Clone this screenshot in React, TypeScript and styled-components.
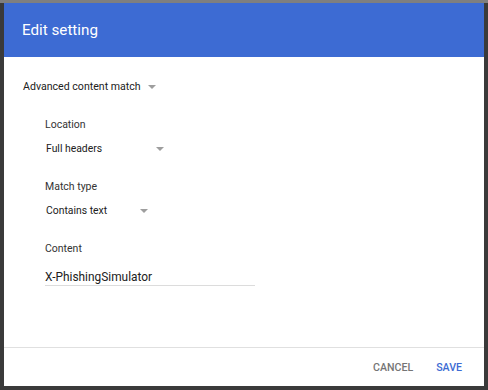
import React from 'react';
import styled, {createGlobalStyle} from 'styled-components';

const GlobalStyle = createGlobalStyle`
  html, body {
    margin: 0;
    padding: 0;
    height: 100%;
  }
  body {
    font-family: Roboto, "Liberation Sans", Arial, sans-serif;
    background: #3a3a3a;
  }
`;

const Backdrop = styled.div`
  width: 488px;
  height: 390px;
  box-sizing: border-box;
  padding: 3px 4px 4px 4px;
  background: linear-gradient(#7f7f7f 0 3px, #3a3a3a 3px 100%);
`;

const Dialog = styled.div`
  width: 480px;
  height: 383px;
  background: #ffffff;
  display: flex;
  flex-direction: column;
`;

const Header = styled.div`
  height: 54px;
  background: #3d6bd3;
  color: #ffffff;
  font-size: 15.2px;
  display: flex;
  align-items: center;
  padding: 0 18px;
  flex-shrink: 0;
`;

const Body = styled.div`
  flex-grow: 1;
  padding: 20px 19px 0 19px;
  display: flex;
  flex-direction: column;
`;

const TopSelect = styled.div`
  display: flex;
  align-items: center;
  height: 18px;
  font-size: 10.6px;
  color: #212121;
  gap: 7px;
`;

const Nested = styled.div`
  padding: 23px 0 0 22px;
  display: flex;
  flex-direction: column;
  gap: 24px;
`;

const Field = styled.div`
  display: flex;
  flex-direction: column;
`;

const Label = styled.div`
  font-size: 10.5px;
  color: #333333;
  height: 14px;
  line-height: 14px;
`;

const Select = styled.div<{$width: number}>`
  display: flex;
  align-items: center;
  justify-content: space-between;
  width: ${p => p.$width}px;
  margin-top: 8px;
  padding-left: 1px;
  height: 16px;
  font-size: 10.4px;
  color: #212121;
`;

const Arrow = styled.span`
  width: 0;
  height: 0;
  border-left: 4.5px solid transparent;
  border-right: 4.5px solid transparent;
  border-top: 4.5px solid #9e9e9e;
  margin-top: 1px;
`;

const Input = styled.div`
  width: 210px;
  margin-top: 14px;
  font-size: 11.9px;
  color: #212121;
  height: 15px;
  line-height: 15px;
  border-bottom: 1px solid #dcdcdc;
`;

const Footer = styled.div`
  height: 38px;
  border-top: 1px solid #e0e0e0;
  display: flex;
  align-items: center;
  justify-content: flex-end;
  padding: 0 22px 0 0;
  gap: 23px;
  flex-shrink: 0;
`;

const Button = styled.span<{$primary?: boolean}>`
  font-size: 10.6px;
  font-weight: 500;
  color: ${p => (p.$primary ? '#3d6bd3' : '#757575')};
`;

export default function App() {
    return (
        <>
            <GlobalStyle/>
            <Backdrop>
                <Dialog>
                    <Header>Edit setting</Header>
                    <Body>
                        <TopSelect>Advanced content match <Arrow/></TopSelect>
                        <Nested>
                            <Field>
                                <Label>Location</Label>
                                <Select $width={118}>Full headers <Arrow/></Select>
                            </Field>
                            <Field>
                                <Label>Match type</Label>
                                <Select $width={102}>Contains text <Arrow/></Select>
                            </Field>
                            <Field>
                                <Label>Content</Label>
                                <Input>X-PhishingSimulator</Input>
                            </Field>
                        </Nested>
                    </Body>
                    <Footer>
                        <Button>CANCEL</Button>
                        <Button $primary>SAVE</Button>
                    </Footer>
                </Dialog>
            </Backdrop>
        </>
    );
}
